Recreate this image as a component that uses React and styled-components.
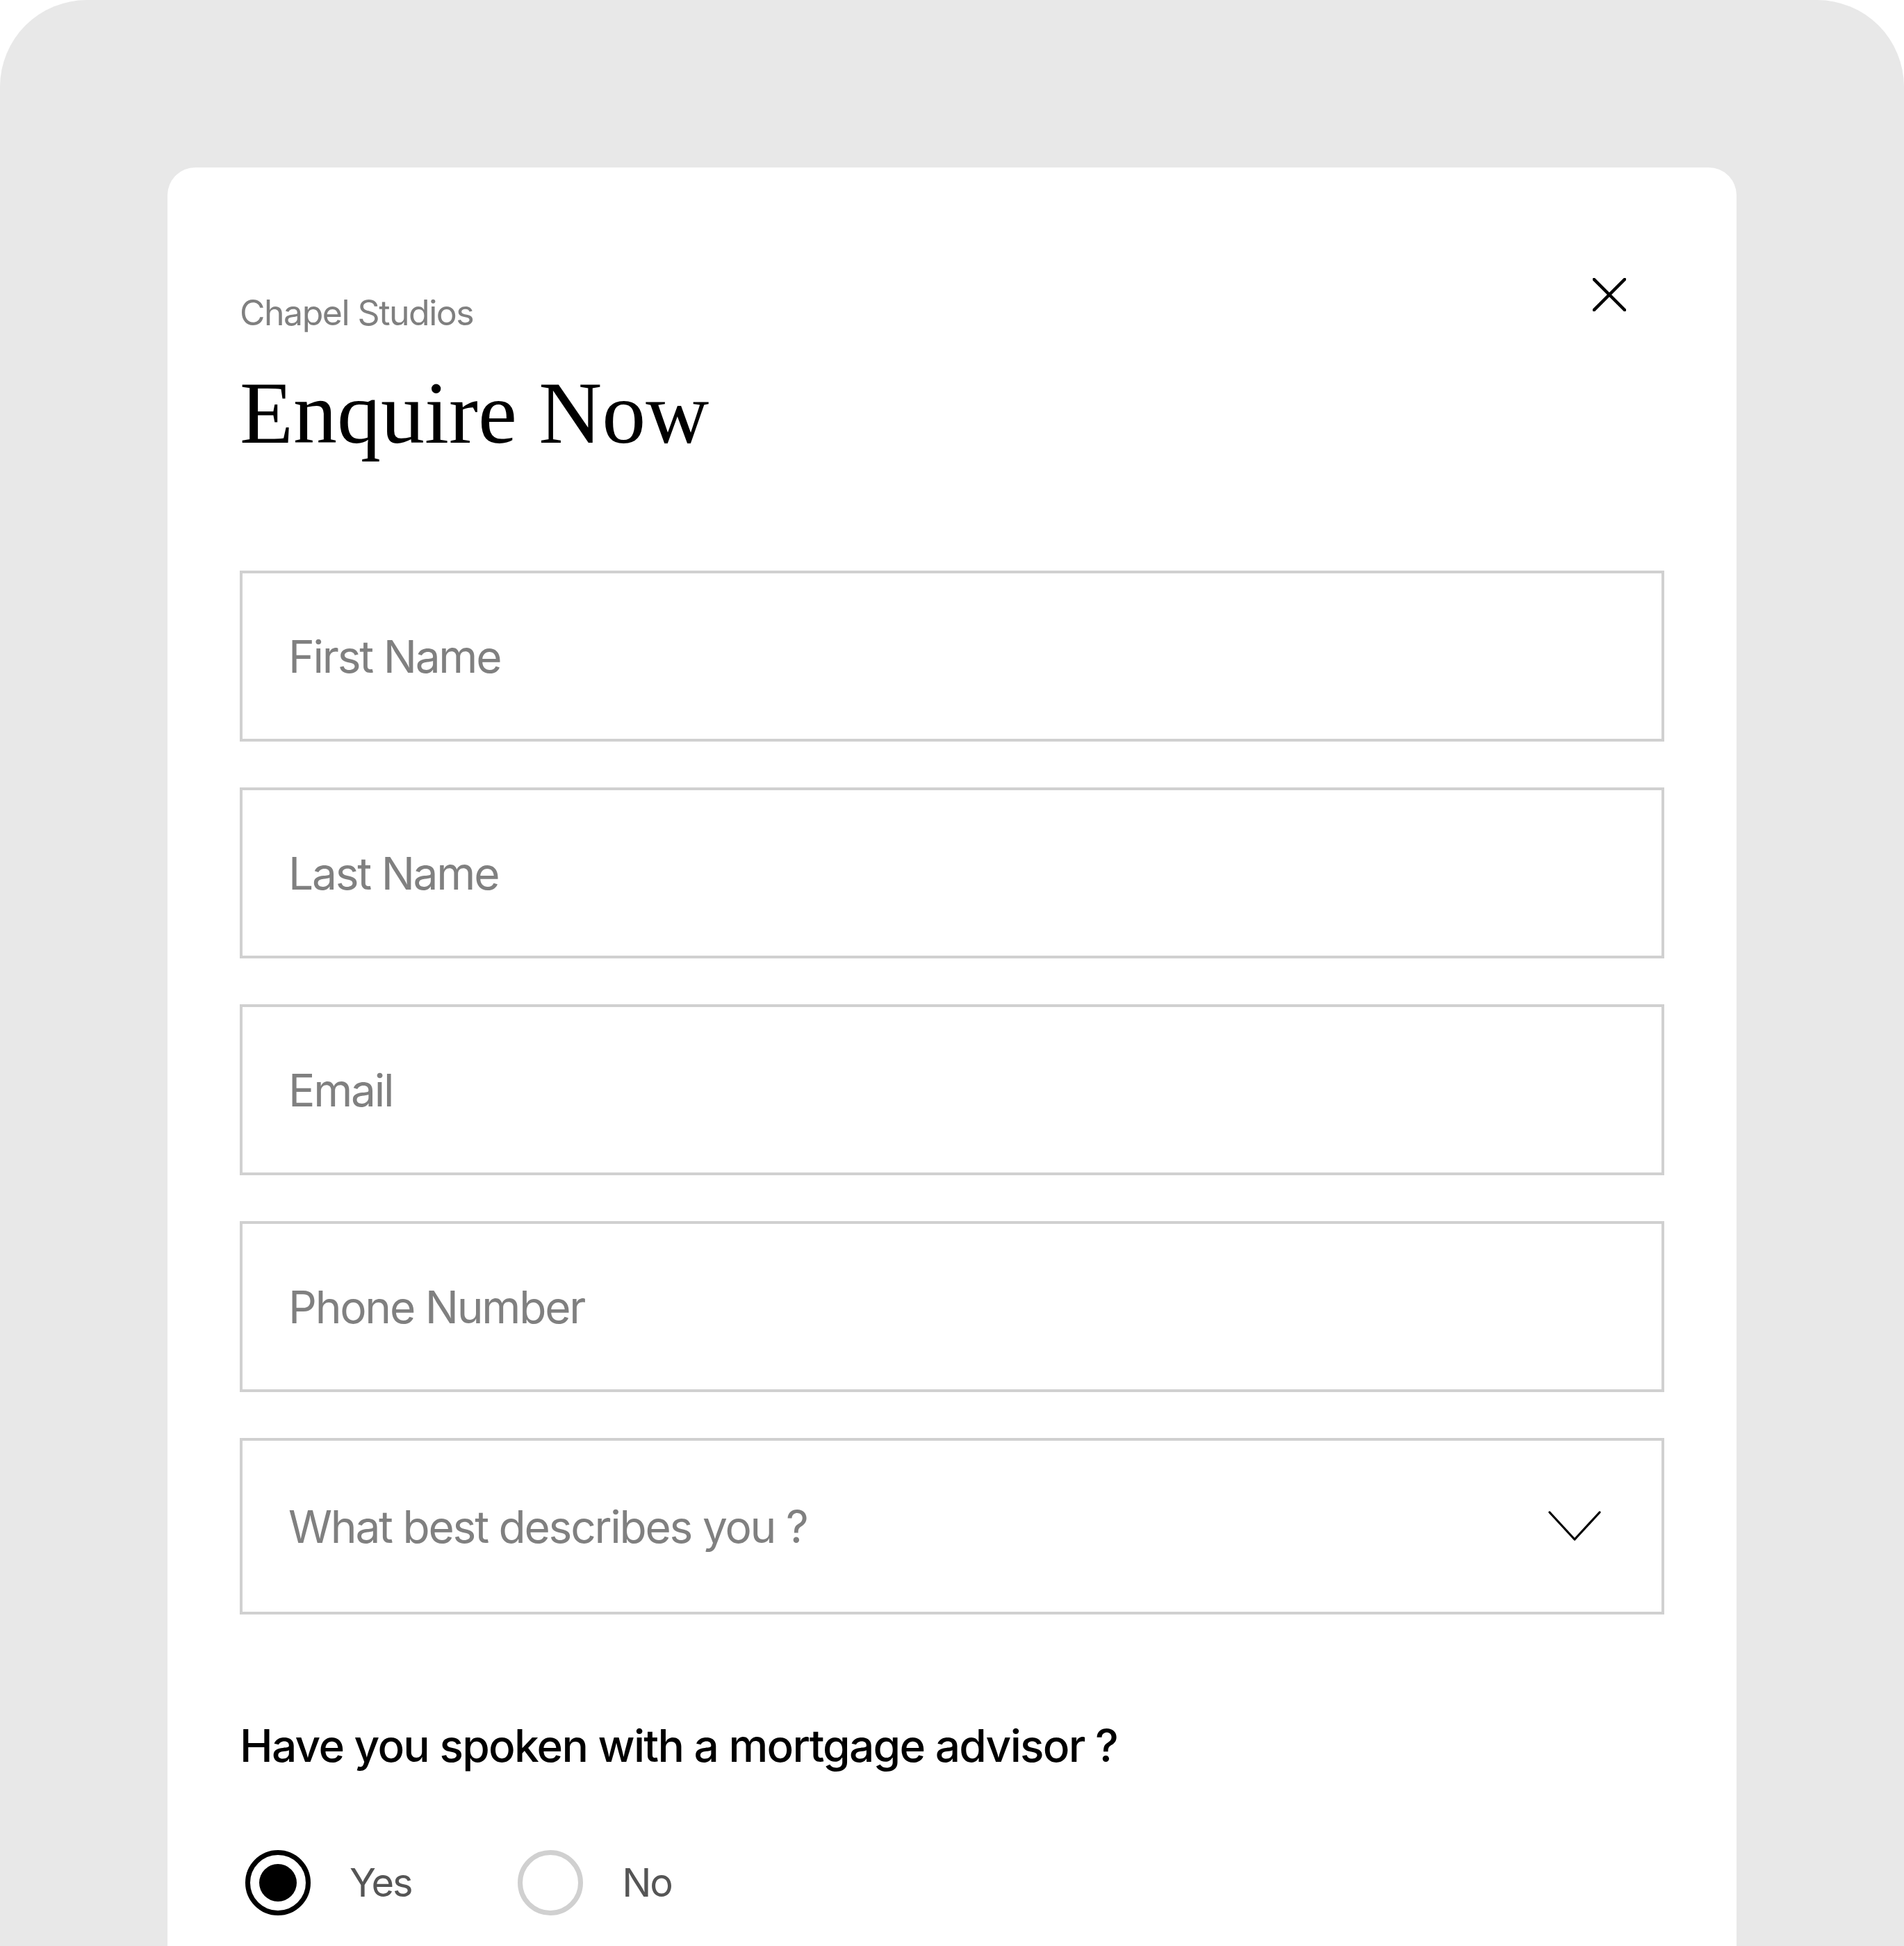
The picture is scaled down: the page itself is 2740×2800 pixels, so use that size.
import React from "react";
import styled, { createGlobalStyle } from "styled-components";

const fields = ["First Name", "Last Name", "Email", "Phone Number"];

function CloseIcon() {
    return (
        <svg width="48" height="48" viewBox="0 0 48 48" fill="none">
            <path d="M2 2L46 46M46 2L2 46" stroke="#000" strokeWidth="4.5" strokeLinecap="square" />
        </svg>
    );
}

function Chevron() {
    return (
        <svg width="76" height="44" viewBox="0 0 76 44" fill="none">
            <path d="M2 2L38 41L74 2" stroke="#000" strokeWidth="3.2" strokeLinecap="round" strokeLinejoin="round" />
        </svg>
    );
}

export default function App() {
    return (
        <>
            <GlobalStyle />
            <Frame>
                <Card>
                    <Header>
                        <div>
                            <Brand>Chapel Studios</Brand>
                            <Title>Enquire Now</Title>
                        </div>
                        <CloseButton aria-label="Close">
                            <CloseIcon />
                        </CloseButton>
                    </Header>

                    <Form>
                        {fields.map((label) => (
                            <Field key={label}>
                                <Placeholder>{label}</Placeholder>
                            </Field>
                        ))}
                        <Field tall>
                            <Placeholder>What best describes you ?</Placeholder>
                            <Chevron />
                        </Field>
                    </Form>

                    <Question>Have you spoken with a mortgage advisor ?</Question>

                    <Options>
                        <Option>
                            <Radio checked />
                            <OptionLabel>Yes</OptionLabel>
                        </Option>
                        <Option>
                            <Radio />
                            <OptionLabel>No</OptionLabel>
                        </Option>
                    </Options>
                </Card>
            </Frame>
        </>
    );
}

const GlobalStyle = createGlobalStyle`
    html, body {
        margin: 0;
        padding: 0;
        background: #fff;
    }
    * {
        box-sizing: border-box;
    }
`;

const Frame = styled.div`
    width: 2740px;
    height: 2800px;
    background: #e8e8e8;
    border-radius: 125px 125px 0 0;
    padding: 241px 241px 0 241px;
    overflow: hidden;
`;

const Card = styled.div`
    background: #fff;
    border-radius: 40px 40px 0 0;
    min-height: 2700px;
    padding: 179px 104px 0 104px;
    font-family: Inter, "Liberation Sans", sans-serif;
`;

const Header = styled.div`
    display: flex;
    justify-content: space-between;
    align-items: flex-start;
`;

const Brand = styled.div`
    font-size: 50px;
    line-height: 60px;
    color: #808080;
    letter-spacing: -0.03em;
`;

const Title = styled.h1`
    margin: 52px 0 0;
    font-family: "Liberation Serif", "Times New Roman", serif;
    font-weight: 400;
    font-size: 126px;
    line-height: 126px;
    color: #000;
    letter-spacing: 0;
`;

const CloseButton = styled.button`
    display: flex;
    padding: 0;
    margin: -20px 55px 0 0;
    border: none;
    background: none;
    cursor: pointer;
`;

const Form = styled.div`
    display: flex;
    flex-direction: column;
    gap: 66px;
    margin-top: 163px;
`;

const Field = styled.div`
    display: flex;
    align-items: center;
    justify-content: space-between;
    height: ${(props) => (props.tall ? "254px" : "246px")};
    border: 4px solid #d0d0d0;
    padding: 0 87px 0 66px;
`;

const Placeholder = styled.span`
    font-size: 64px;
    color: #808080;
    letter-spacing: -0.035em;
`;

const Question = styled.div`
    margin-top: 152px;
    font-size: 64px;
    line-height: 74px;
    font-weight: 500;
    color: #000;
    letter-spacing: -0.027em;
`;

const Options = styled.div`
    display: flex;
    align-items: center;
    gap: 153px;
    margin-top: 113px;
    padding-left: 8px;
`;

const Option = styled.label`
    display: flex;
    align-items: center;
    gap: 56px;
    cursor: pointer;
`;

const Radio = styled.span`
    display: flex;
    align-items: center;
    justify-content: center;
    width: 94px;
    height: 94px;
    border-radius: 50%;
    border: 7px solid ${(props) => (props.checked ? "#000" : "#d0d0d0")};

    &::after {
        content: "";
        display: ${(props) => (props.checked ? "block" : "none")};
        width: 54px;
        height: 54px;
        border-radius: 50%;
        background: #000;
    }
`;

const OptionLabel = styled.span`
    font-size: 56px;
    color: #555;
    letter-spacing: -0.04em;
`;
